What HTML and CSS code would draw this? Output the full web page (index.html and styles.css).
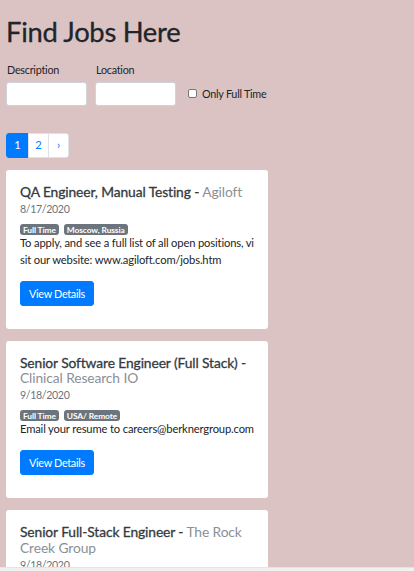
FILE: index.html
```html
<!DOCTYPE html>
<html lang="en">
<head>
<meta charset="utf-8">
<title>Find Jobs Here</title>
<link rel="stylesheet" href="styles.css">
</head>
<body>
<div class="container">
  <h1 class="title">Find Jobs Here</h1>
  <form class="search">
    <div class="field">
      <label class="field-label">Description</label>
      <input class="field-input" type="text">
    </div>
    <div class="field">
      <label class="field-label">Location</label>
      <input class="field-input" type="text">
    </div>
    <label class="check">
      <span class="check-box"></span>
      <span class="check-text">Only Full Time</span>
    </label>
  </form>

  <ul class="pagination">
    <li class="page active">1</li>
    <li class="page">2</li>
    <li class="page">&rsaquo;</li>
  </ul>

  <div class="cards">
    <div class="card">
      <h5 class="card-title">QA Engineer, Manual Testing - <span class="company">Agiloft</span></h5>
      <div class="card-date">8/17/2020</div>
      <div class="badges"><span class="badge">Full Time</span><span class="badge">Moscow, Russia</span></div>
      <p class="card-text">To apply, and see a full list of all open positions, vi<br>sit our website: www.agiloft.com/jobs.htm</p>
      <button class="btn" type="button">View Details</button>
    </div>

    <div class="card">
      <h5 class="card-title">Senior Software Engineer (Full Stack) - <span class="company">Clinical Research IO</span></h5>
      <div class="card-date">9/18/2020</div>
      <div class="badges"><span class="badge">Full Time</span><span class="badge">USA/ Remote</span></div>
      <p class="card-text">Email your resume to careers@berknergroup.com</p>
      <button class="btn" type="button">View Details</button>
    </div>

    <div class="card">
      <h5 class="card-title">Senior Full-Stack Engineer - <span class="company">The Rock Creek Group</span></h5>
      <div class="card-date">9/18/2020</div>
      <div class="badges"><span class="badge">Full Time</span><span class="badge">Remote</span></div>
      <p class="card-text">Apply online.</p>
      <button class="btn" type="button">View Details</button>
    </div>
  </div>
</div>
<div class="hscroll"></div>
</body>
</html>
```
FILE: styles.css
```css
html, body {
  margin: 0;
  padding: 0;
}
body {
  background: #dbc3c3;
  font-family: Lato, "Liberation Sans", sans-serif;
  font-size: 11.2px;
  letter-spacing: -0.15px;
  line-height: 1.5;
  color: #212529;
}
.container {
  padding: 16px 6px 0 6px;
}
.title {
  margin: 0 0 13px 0;
  font-size: 27.4px;
  font-weight: 400;
  letter-spacing: -0.3px;
  line-height: 1.2;
  color: #212529;
  -webkit-text-stroke: 0.3px #212529;
}
.search {
  display: flex;
  align-items: flex-end;
  gap: 8px;
  margin: 0;
}
.field {
  display: flex;
  flex-direction: column;
  gap: 3px;
}
.field-label {
  font-size: 10.8px;
  line-height: 16.8px;
  padding-left: 1px;
  letter-spacing: -0.25px;
}
.field-input {
  box-sizing: border-box;
  width: 81px;
  height: 24px;
  margin: 0;
  border: 1px solid #ced4da;
  border-radius: 3px;
  background: #fff;
}
.check {
  display: flex;
  align-items: center;
  gap: 5px;
  height: 24px;
  margin-left: 4px;
}
.check-box {
  box-sizing: border-box;
  width: 9px;
  height: 9px;
  border: 1px solid #767676;
  border-radius: 2px;
  background: #fff;
}
.check-text {
  font-size: 10.8px;
  letter-spacing: -0.25px;
}
.pagination {
  display: flex;
  list-style: none;
  margin: 27px 0 12px 0;
  padding: 0;
}
.page {
  box-sizing: border-box;
  height: 25px;
  width: 21px;
  display: flex;
  align-items: center;
  justify-content: center;
  background: #fff;
  color: #007bff;
  border: 1px solid #dee2e6;
  margin-left: -1px;
}
.page:first-child {
  margin-left: 0;
  width: 23px;
  border-radius: 3px 0 0 3px;
}
.page:last-child {
  border-radius: 0 3px 3px 0;
}
.page.active {
  background: #007bff;
  border-color: #007bff;
  color: #fff;
}
.cards {
  display: flex;
  flex-direction: column;
  gap: 12px;
}
.card {
  box-sizing: border-box;
  width: 262px;
  background: #fff;
  border-radius: 3px;
  padding: 14px 14px 23px 14px;
}
.card-title {
  margin: 0 0 2px 0;
  font-size: 13.8px;
  font-weight: 400;
  letter-spacing: -0.1px;
  line-height: 15.4px;
  color: #343a40;
  -webkit-text-stroke: 0.3px #343a40;
}
.company {
  color: #8a9096;
  -webkit-text-stroke: 0;
}
.card-date {
  font-size: 10.6px;
  letter-spacing: -0.35px;
  line-height: 16px;
  color: #6c757d;
  margin-bottom: 7px;
}
.badges {
  display: flex;
  gap: 5px;
}
.badge {
  display: inline-block;
  background: #6c757d;
  color: #fff;
  font-size: 8.4px;
  font-weight: 700;
  letter-spacing: -0.1px;
  line-height: 8px;
  padding: 1.5px 3px;
  border-radius: 3px;
}
.card-text {
  margin: 0 0 12px 0;
  line-height: 16.8px;
  white-space: nowrap;
}
.btn {
  display: block;
  margin: 0;
  box-sizing: border-box;
  height: 25px;
  padding: 0 8px;
  border: 1px solid #007bff;
  border-radius: 3px;
  background: #007bff;
  color: #fff;
  font-family: inherit;
  font-size: 10.8px;
  letter-spacing: -0.3px;
}
.hscroll {
  position: fixed;
  left: 0;
  right: 0;
  bottom: 0;
  height: 3px;
  background: #f1f1f1;
  border-top: 1px solid #e4e4e4;
}
```
